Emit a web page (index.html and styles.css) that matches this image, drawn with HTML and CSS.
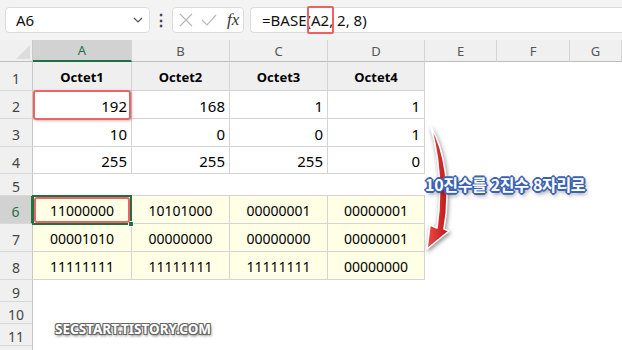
FILE: index.html
```html
<!DOCTYPE html>
<html lang="ko">
<head>
    <meta charset="UTF-8">
    <title>BASE 함수</title>
    <link rel="stylesheet" href="styles.css">
</head>
<body>
    <div class="formula-bar">
        <div class="name-box">
            <span>A6</span>
            <svg class="chevron" width="10" height="6" viewBox="0 0 10 6"><path d="M1 1 L5 5 L9 1" fill="none" stroke="#555" stroke-width="1.2"/></svg>
        </div>
        <div class="dots">⋮</div>
        <div class="fx-box">
            <svg width="14" height="14" viewBox="0 0 14 14"><path d="M1 1 L13 13 M13 1 L1 13" stroke="#b8b8b8" stroke-width="1.2"/></svg>
            <svg width="16" height="14" viewBox="0 0 16 14"><path d="M1 7 L6 12 L15 2" fill="none" stroke="#b8b8b8" stroke-width="1.2"/></svg>
            <span class="fx">fx</span>
        </div>
        <div class="formula-box">=BASE(A2, 2, 8)<span class="mark-formula"></span></div>
    </div>

    <div class="sheet">
        <div class="corner"><svg width="20" height="18" viewBox="0 0 20 18"><path d="M18 2 L18 16 L4 16 Z" fill="#dcdcdc"/></svg></div>
        <div class="colh sel">A</div>
        <div class="colh">B</div>
        <div class="colh">C</div>
        <div class="colh">D</div>
        <div class="colh">E</div>
        <div class="colh">F</div>
        <div class="colh">G</div>

        <div class="rowh">1</div>
        <div class="cell head">Octet1</div>
        <div class="cell head">Octet2</div>
        <div class="cell head">Octet3</div>
        <div class="cell head">Octet4</div>
        <div class="blank"></div><div class="blank"></div><div class="blank"></div>

        <div class="rowh">2</div>
        <div class="cell num">192</div>
        <div class="cell num">168</div>
        <div class="cell num">1</div>
        <div class="cell num">1</div>
        <div class="blank"></div><div class="blank"></div><div class="blank"></div>

        <div class="rowh">3</div>
        <div class="cell num">10</div>
        <div class="cell num">0</div>
        <div class="cell num">0</div>
        <div class="cell num">1</div>
        <div class="blank"></div><div class="blank"></div><div class="blank"></div>

        <div class="rowh">4</div>
        <div class="cell num">255</div>
        <div class="cell num">255</div>
        <div class="cell num">255</div>
        <div class="cell num">0</div>
        <div class="blank"></div><div class="blank"></div><div class="blank"></div>

        <div class="rowh">5</div>
        <div class="gap"></div><div class="gap"></div><div class="gap"></div><div class="gap"></div>
        <div class="blank"></div><div class="blank"></div><div class="blank"></div>

        <div class="rowh sel">6</div>
        <div class="cell bin">11000000</div>
        <div class="cell bin">10101000</div>
        <div class="cell bin">00000001</div>
        <div class="cell bin">00000001</div>
        <div class="blank"></div><div class="blank"></div><div class="blank"></div>

        <div class="rowh">7</div>
        <div class="cell bin">00001010</div>
        <div class="cell bin">00000000</div>
        <div class="cell bin">00000000</div>
        <div class="cell bin">00000001</div>
        <div class="blank"></div><div class="blank"></div><div class="blank"></div>

        <div class="rowh">8</div>
        <div class="cell bin">11111111</div>
        <div class="cell bin">11111111</div>
        <div class="cell bin">11111111</div>
        <div class="cell bin">00000000</div>
        <div class="blank"></div><div class="blank"></div><div class="blank"></div>

        <div class="rowh">9</div>
        <div class="blank wide"></div>
        <div class="rowh">10</div>
        <div class="blank wide"></div>
        <div class="rowh">11</div>
        <div class="blank wide"></div>
        <div class="rowh last"></div>
        <div class="blank wide"></div>
    </div>

    <!-- overlays -->
    <div class="mark mark-a2"></div>
    <div class="selection"><div class="handle"></div></div>
    <div class="mark mark-a6"></div>

    <svg class="arrow" width="60" height="140" viewBox="0 0 60 140">
        <defs>
            <linearGradient id="red" x1="0" y1="0" x2="1" y2="0">
                <stop offset="0" stop-color="#f04848"/>
                <stop offset="1" stop-color="#b81818"/>
            </linearGradient>
        </defs>
        <path d="M21 7 C35 30 41 72 34 109 L39 111 L17 129 L20 105 L27 108 C32 72 29 36 21 7 Z" fill="url(#red)" stroke="#fff" stroke-width="1.6" stroke-linejoin="round"/>
    </svg>

    <div class="note">10진수를 2진수 8자리로</div>
    <div class="watermark">SECSTART.TISTORY.COM</div>
</body>
</html>
```

FILE: styles.css
```css
* {
    box-sizing: border-box;
}

body {
    margin: 0;
    width: 622px;
    height: 350px;
    overflow: hidden;
    position: relative;
    background: #fff;
    font-family: 'Noto Sans', 'Noto Sans CJK KR', sans-serif;
    color: #111;
}

/* formula bar */
.formula-bar {
    height: 40px;
    background: #f3f3f3;
    display: flex;
    align-items: center;
    padding: 0 0 0 5px;
}

.name-box {
    width: 145px;
    height: 26px;
    background: #fff;
    border: 1px solid #dcdcdc;
    border-radius: 4px;
    display: flex;
    align-items: center;
    justify-content: space-between;
    padding: 0 6px 0 10px;
    font-size: 15px;
}

.dots {
    width: 22px;
    text-align: center;
    font-size: 16px;
    font-weight: bold;
    color: #444;
}

.fx-box {
    width: 72px;
    height: 26px;
    background: #fff;
    border: 1px solid #dcdcdc;
    border-radius: 4px;
    display: flex;
    align-items: center;
    gap: 8px;
    padding: 0 0 0 6px;
}

.fx {
    font-family: 'Liberation Serif', serif;
    font-style: italic;
    font-size: 17px;
    color: #333;
    margin-left: 2px;
}

.formula-box {
    flex: 1;
    height: 26px;
    margin-left: 6px;
    background: #fff;
    border: 1px solid #dcdcdc;
    border-right: none;
    border-radius: 4px 0 0 4px;
    display: flex;
    align-items: center;
    padding-left: 11px;
    font-size: 15px;
    position: relative;
}

.mark-formula {
    position: absolute;
    left: 56px;
    top: -2px;
    width: 27px;
    height: 28px;
    border: 2px solid #f06060;
    border-radius: 2px;
}

/* sheet */
.sheet {
    display: grid;
    grid-template-columns: 33px 99px 98px 98px 97px 72px 73px 52px;
    grid-template-rows: 22px 29px 28px 28px 27px 22px 28px 28px 28px 22px 22px 22px 4px;
    font-size: 14px;
}

.corner {
    background: #f0f0f0;
    border-right: 1px solid #c8c8c8;
    border-bottom: 1px solid #bdbdbd;
    display: flex;
    align-items: flex-end;
    justify-content: flex-end;
}

.colh {
    background: #f0f0f0;
    border-right: 1px solid #d4d4d4;
    border-bottom: 1px solid #bdbdbd;
    color: #555;
    font-size: 13px;
    display: flex;
    align-items: center;
    justify-content: center;
}

.colh.sel {
    background: #d2d2d2;
    color: #1e7145;
    border-bottom: 2px solid #1e7145;
}

.rowh {
    background: #f0f0f0;
    border-right: 1px solid #c8c8c8;
    border-bottom: 1px solid #d8d8d8;
    color: #444;
    font-size: 14px;
    display: flex;
    align-items: center;
    justify-content: center;
    padding-top: 4px;
}

.rowh.last {
    border-bottom: none;
    padding: 0;
}

.rowh.sel {
    background: #d2d2d2;
    color: #1e7145;
    border-right: 2px solid #1e7145;
}

.cell {
    border-right: 1px solid #d4d4d4;
    border-bottom: 1px solid #d4d4d4;
    display: flex;
    align-items: center;
    padding: 2px 4px 0;
    color: #000;
}

.cell.head {
    background: #efefef;
    font-weight: bold;
    font-size: 13px;
    justify-content: center;
}

.cell.num {
    justify-content: flex-end;
    font-size: 15px;
}

.cell.bin {
    background: #ffffe6;
    justify-content: center;
    font-size: 14px;
}

.gap {
    border-bottom: 1px solid #d4d4d4;
}

.blank.wide {
    grid-column: span 7;
}

/* overlays */
.mark {
    position: absolute;
    border: 2px solid #ee6464;
    border-radius: 3px;
    box-shadow: 1px 1px 3px rgba(0, 0, 0, 0.25);
}

.mark-a2 {
    left: 33px;
    top: 90px;
    width: 98px;
    height: 30px;
}

.selection {
    position: absolute;
    left: 32px;
    top: 195px;
    width: 100px;
    height: 30px;
    border: 2px solid #1e7145;
}

.handle {
    position: absolute;
    right: -4px;
    bottom: -4px;
    width: 6px;
    height: 6px;
    background: #1e7145;
    border: 1px solid #fff;
}

.mark-a6 {
    left: 34px;
    top: 197px;
    width: 96px;
    height: 26px;
    box-shadow: none;
}

.arrow {
    position: absolute;
    left: 410px;
    top: 120px;
    filter: drop-shadow(1px 2px 2px rgba(0, 0, 0, 0.45));
}

.note {
    position: absolute;
    left: 425px;
    top: 172px;
    font-family: 'Noto Sans CJK KR', sans-serif;
    font-weight: bold;
    font-size: 16px;
    color: #fff;
    letter-spacing: -0.3px;
    text-shadow:
        -1px -1px 0 #3b62b4, 1px -1px 0 #3b62b4, -1px 1px 0 #3b62b4, 1px 1px 0 #3b62b4,
        0 -2px 0 #3b62b4, 0 2px 0 #3b62b4, -2px 0 0 #3b62b4, 2px 0 0 #3b62b4,
        2px 3px 4px rgba(0, 0, 0, 0.55);
}

.watermark {
    position: absolute;
    left: 55px;
    top: 320px;
    font-family: 'Noto Sans', sans-serif;
    font-weight: bold;
    font-size: 13.5px;
    color: #fff;
    text-shadow:
        -1px -1px 0 #666, 1px -1px 0 #666, -1px 1px 0 #666, 1px 1px 0 #666,
        1px 2px 3px rgba(0, 0, 0, 0.6);
}
```
